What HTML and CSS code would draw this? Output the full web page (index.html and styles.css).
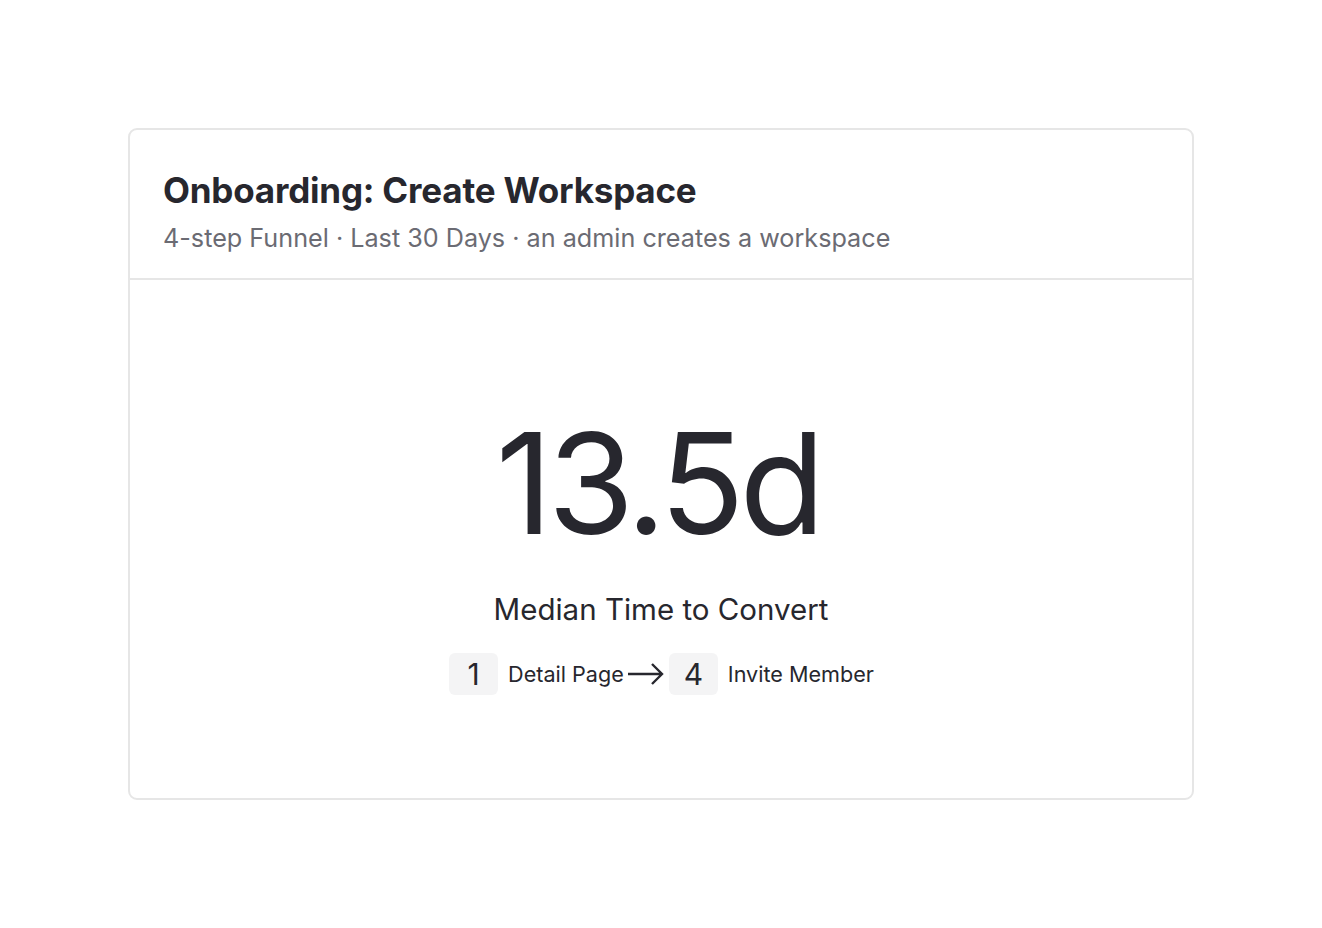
FILE: index.html
```html
<!DOCTYPE html>
<html>
<head>
<meta charset="utf-8">
<link rel="stylesheet" href="styles.css">
</head>
<body>
<div class="page">
  <div class="card">
    <div class="card-header">
      <div class="title">Onboarding: Create Workspace</div>
      <div class="subtitle">4-step Funnel · Last 30 Days · an admin creates a workspace</div>
    </div>
    <div class="card-body">
      <div class="metric">13.5d</div>
      <div class="metric-label">Median Time to Convert</div>
      <div class="steps">
        <span class="badge">1</span>
        <span class="step-name">Detail Page</span>
        <svg class="arrow" width="38" height="24" viewBox="0 0 38 24"><path d="M1 12 H35 M25 2 L35 12 L25 22" fill="none" stroke="#27272e" stroke-width="2.4"/></svg>
        <span class="badge">4</span>
        <span class="step-name">Invite Member</span>
      </div>
    </div>
  </div>
</div>
</body>
</html>
```

FILE: styles.css
```css
html, body { margin: 0; padding: 0; background: #fff; }
body { font-family: Inter, "Noto Sans", sans-serif; color: #27272e; }
.page { padding: 128px 128px 0 128px; width: 1066px; }
.card {
  border: 2px solid #e6e6e6;
  border-radius: 9px;
  box-sizing: border-box;
  width: 1066px;
  height: 672px;
  display: flex;
  flex-direction: column;
}
.card-header {
  padding: 36px 33px 21px 33px;
  border-bottom: 2px solid #e6e6e6;
}
.title { font-size: 35px; font-weight: 700; line-height: 48px; letter-spacing: -0.2px; }
.subtitle { font-size: 25.2px; color: #6b6b73; line-height: 38px; margin-top: 5px; }
.card-body {
  flex: 1;
  display: flex;
  flex-direction: column;
  align-items: center;
  padding-top: 131px;
}
.metric { font-size: 140px; line-height: 144px; letter-spacing: -5px; margin-right: 6px; }
.metric-label { font-size: 29.5px; line-height: 36px; margin-top: 36px; }
.steps { display: flex; align-items: center; margin-top: 26px; margin-left: 1px; }
.badge {
  width: 49px; height: 42px; border-radius: 6px; background: #f4f4f5;
  display: flex; align-items: center; justify-content: center;
  font-size: 30px;
}
.step-name { font-size: 21.6px; margin-left: 10px; }
.arrow { margin: 0 4px 0 3px; }
```
